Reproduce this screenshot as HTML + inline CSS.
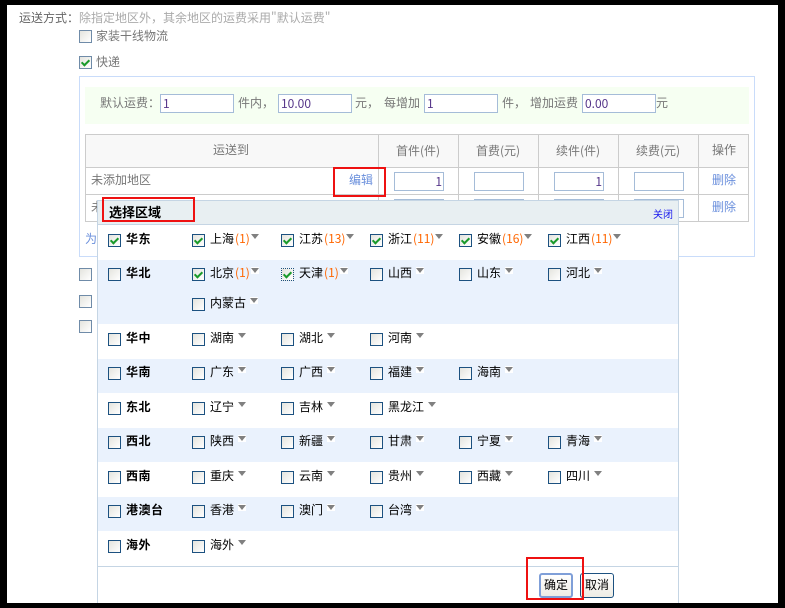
<!DOCTYPE html>
<html lang="zh"><head><meta charset="utf-8"><style>
html,body{margin:0;padding:0;background:#000}
#p{position:relative;width:785px;height:608px;overflow:hidden;background:#000;font:12px/14px "WenQuanYi Zen Hei","Noto Sans CJK SC","Liberation Sans",sans-serif;color:#000}
#w{position:absolute;left:7px;top:5px;width:771px;height:598px;background:#fff}
#p div,#p span.t,#p span.in,#p i.c,#p span.i{position:absolute;display:block}
.t{white-space:nowrap;color:#777}
.in{height:17px;width:72px;border:1px solid #a5bcd8;background:#fff;color:#56368a;line-height:17px;padding:0;text-indent:2px}
.sm{width:48px;text-align:right;text-indent:0}
.sm b{font-weight:normal;margin-right:1px}
.c{width:11px;height:11px;border:1px solid #1c5180;background:linear-gradient(135deg,#e4e4de,#fff);box-sizing:content-box}
.g{border-color:#6f8ba8}
.k:after{content:"";position:absolute;left:3px;top:1px;width:3px;height:6px;border:solid #1a9a2a;border-width:0 2px 2px 0;transform:rotate(45deg)}
.d{border-style:dotted}
.h{left:0;width:100%}
.i{white-space:nowrap;height:14px;left:0}
.i u{position:absolute;left:18px;top:-2px;text-decoration:none;color:#000;white-space:nowrap}
.i em{font-style:normal;color:#f60;margin-left:1px}
.i s{display:inline-block;position:relative;width:8px;height:7px;background:#fff;vertical-align:3px;margin-left:1px}
.i s:after{content:"";position:absolute;left:0;top:1px;width:0;height:0;border:solid transparent;border-width:5px 4px 0;border-top-color:#808080}
.x0{left:108px}.x1{left:192px}.x2{left:281px}.x3{left:370px}.x4{left:459px}.x5{left:548px}
.a u s{margin-left:4px}
.l{position:absolute;left:18px;top:-2px;font-weight:bold;color:#000;white-space:nowrap;letter-spacing:.5px}
.red{border:2px solid #ee1111;box-sizing:border-box}
.bl{color:#6a8fdc}
.th{background:#f8f8f8;box-sizing:border-box;border-right:1px solid #ccc;border-bottom:1px solid #ccc}
.btn{top:573px;width:34px;height:25px;box-sizing:border-box;background:linear-gradient(#fff,#eeece4);border:1px solid #1c5180;border-radius:3px;text-align:center;line-height:21px;color:#000}
</style></head><body><div id="p"><div id="w" style="left:7px"></div>

<span class="t" style="left:19px;top:11px;color:#666">运送方式：</span>
<span class="t" style="left:79px;top:11px;color:#aaa">除指定地区外，其余地区的运费采用"默认运费"</span>
<i class="c g" style="left:79px;top:30px"></i><span class="t" style="left:96px;top:29px">家装干线物流</span>
<i class="c g k" style="left:79px;top:56px"></i><span class="t" style="left:96px;top:55px">快递</span>

<div style="left:79px;top:76px;width:674px;height:179px;border:1px solid #c9dcfa"></div>
<div style="left:85px;top:87px;width:664px;height:37px;background:#f6fff2"></div>
<span class="t" style="left:100px;top:96px">默认运费：</span>
<span class="in" style="left:160px;top:94px">1</span>
<span class="t" style="left:238px;top:96px">件内，</span>
<span class="in" style="left:278px;top:94px">10.00</span>
<span class="t" style="left:355px;top:96px">元，</span><span class="t" style="left:384px;top:96px">每增加</span>
<span class="in" style="left:424px;top:94px">1</span>
<span class="t" style="left:502px;top:96px">件，</span><span class="t" style="left:530px;top:96px">增加运费</span>
<span class="in" style="left:582px;top:94px">0.00</span>
<span class="t" style="left:656px;top:96px">元</span>

<div style="left:85px;top:134px;width:664px;height:88px;box-sizing:border-box;border:1px solid #ccc;border-right:0;border-bottom:0"></div>
<div class="th" style="left:86px;top:135px;width:293px;height:33px"></div>
<div class="th" style="left:379px;top:135px;width:80px;height:33px"></div>
<div class="th" style="left:459px;top:135px;width:80px;height:33px"></div>
<div class="th" style="left:539px;top:135px;width:80px;height:33px"></div>
<div class="th" style="left:619px;top:135px;width:80px;height:33px"></div>
<div class="th" style="left:699px;top:135px;width:50px;height:33px"></div>
<div class="th" style="left:86px;top:168px;width:293px;height:27px;background:#fff"></div>
<div class="th" style="left:379px;top:168px;width:80px;height:27px;background:#fff"></div>
<div class="th" style="left:459px;top:168px;width:80px;height:27px;background:#fff"></div>
<div class="th" style="left:539px;top:168px;width:80px;height:27px;background:#fff"></div>
<div class="th" style="left:619px;top:168px;width:80px;height:27px;background:#fff"></div>
<div class="th" style="left:699px;top:168px;width:50px;height:27px;background:#fff"></div>
<div class="th" style="left:86px;top:195px;width:293px;height:27px;background:#fff"></div>
<div class="th" style="left:379px;top:195px;width:80px;height:27px;background:#fff"></div>
<div class="th" style="left:459px;top:195px;width:80px;height:27px;background:#fff"></div>
<div class="th" style="left:539px;top:195px;width:80px;height:27px;background:#fff"></div>
<div class="th" style="left:619px;top:195px;width:80px;height:27px;background:#fff"></div>
<div class="th" style="left:699px;top:195px;width:50px;height:27px;background:#fff"></div>

<span class="t" style="left:213px;top:143px">运送到</span>
<span class="t" style="left:396px;top:144px">首件(件)</span>
<span class="t" style="left:476px;top:144px">首费(元)</span>
<span class="t" style="left:556px;top:144px">续件(件)</span>
<span class="t" style="left:636px;top:144px">续费(元)</span>
<span class="t" style="left:712px;top:143px">操作</span>
<span class="t" style="left:91px;top:173px">未添加地区</span>
<span class="t bl" style="left:349px;top:173px">编辑</span>
<span class="t" style="left:91px;top:200px">未</span>
<span class="in sm" style="left:394px;top:172px"><b>1</b></span>
<span class="in sm" style="left:474px;top:172px"></span>
<span class="in sm" style="left:554px;top:172px"><b>1</b></span>
<span class="in sm" style="left:634px;top:172px"></span>
<span class="in sm" style="left:394px;top:199px"></span>
<span class="in sm" style="left:474px;top:199px"></span>
<span class="in sm" style="left:554px;top:199px"></span>
<span class="in sm" style="left:634px;top:199px"></span>
<span class="t bl" style="left:712px;top:173px">删除</span>
<span class="t bl" style="left:712px;top:200px">删除</span>
<span class="t bl" style="left:85px;top:232px">为</span>
<i class="c g" style="left:79px;top:268px"></i>
<i class="c g" style="left:79px;top:295px"></i>
<i class="c g" style="left:79px;top:320px"></i>

<div style="left:97px;top:200px;width:582px;height:403px;box-sizing:border-box;border:1px solid #c5d5e4;border-bottom:0;background:#fff"></div>
<div style="left:98px;top:201px;width:580px;height:23px;background:#e8eff2;border-bottom:1px solid #c5d5e4"></div>
<span class="t" style="left:109px;top:205px;color:#000;font-weight:bold;font-size:13px">选择区域</span>
<span class="t" style="left:653px;top:207px;color:#1a1aee;font-size:10px">关闭</span>

<div style="left:98px;top:260px;width:580px;height:64px;background:#eaf2fd"></div>
<div style="left:98px;top:359px;width:580px;height:34px;background:#eaf2fd"></div>
<div style="left:98px;top:428px;width:580px;height:34px;background:#eaf2fd"></div>
<div style="left:98px;top:497px;width:580px;height:34px;background:#eaf2fd"></div>
<div style="left:98px;top:566px;width:580px;height:1px;background:#c5d5e4"></div>

<div class="h" style="top:234px">
<span class="i x0"><i class="c k"></i><span class="l">华东</span></span>
<span class="i x1"><i class="c k"></i><u>上海<em>(1)</em><s></s></u></span>
<span class="i x2"><i class="c k"></i><u>江苏<em>(13)</em><s></s></u></span>
<span class="i x3"><i class="c k"></i><u>浙江<em>(11)</em><s></s></u></span>
<span class="i x4"><i class="c k"></i><u>安徽<em>(16)</em><s></s></u></span>
<span class="i x5"><i class="c k"></i><u>江西<em>(11)</em><s></s></u></span>
</div>
<div class="h" style="top:268px">
<span class="i x0"><i class="c"></i><span class="l">华北</span></span>
<span class="i x1"><i class="c k"></i><u>北京<em>(1)</em><s></s></u></span>
<span class="i x2"><i class="c k d"></i><u>天津<em>(1)</em><s></s></u></span>
<span class="i x3 a"><i class="c"></i><u>山西<s></s></u></span>
<span class="i x4 a"><i class="c"></i><u>山东<s></s></u></span>
<span class="i x5 a"><i class="c"></i><u>河北<s></s></u></span>
</div>
<div class="h" style="top:298px"><span class="i x1 a"><i class="c"></i><u>内蒙古<s></s></u></span></div>
<div class="h" style="top:333px">
<span class="i x0"><i class="c"></i><span class="l">华中</span></span>
<span class="i x1 a"><i class="c"></i><u>湖南<s></s></u></span>
<span class="i x2 a"><i class="c"></i><u>湖北<s></s></u></span>
<span class="i x3 a"><i class="c"></i><u>河南<s></s></u></span>
</div>
<div class="h" style="top:367px">
<span class="i x0"><i class="c"></i><span class="l">华南</span></span>
<span class="i x1 a"><i class="c"></i><u>广东<s></s></u></span>
<span class="i x2 a"><i class="c"></i><u>广西<s></s></u></span>
<span class="i x3 a"><i class="c"></i><u>福建<s></s></u></span>
<span class="i x4 a"><i class="c"></i><u>海南<s></s></u></span>
</div>
<div class="h" style="top:402px">
<span class="i x0"><i class="c"></i><span class="l">东北</span></span>
<span class="i x1 a"><i class="c"></i><u>辽宁<s></s></u></span>
<span class="i x2 a"><i class="c"></i><u>吉林<s></s></u></span>
<span class="i x3 a"><i class="c"></i><u>黑龙江<s></s></u></span>
</div>
<div class="h" style="top:436px">
<span class="i x0"><i class="c"></i><span class="l">西北</span></span>
<span class="i x1 a"><i class="c"></i><u>陕西<s></s></u></span>
<span class="i x2 a"><i class="c"></i><u>新疆<s></s></u></span>
<span class="i x3 a"><i class="c"></i><u>甘肃<s></s></u></span>
<span class="i x4 a"><i class="c"></i><u>宁夏<s></s></u></span>
<span class="i x5 a"><i class="c"></i><u>青海<s></s></u></span>
</div>
<div class="h" style="top:471px">
<span class="i x0"><i class="c"></i><span class="l">西南</span></span>
<span class="i x1 a"><i class="c"></i><u>重庆<s></s></u></span>
<span class="i x2 a"><i class="c"></i><u>云南<s></s></u></span>
<span class="i x3 a"><i class="c"></i><u>贵州<s></s></u></span>
<span class="i x4 a"><i class="c"></i><u>西藏<s></s></u></span>
<span class="i x5 a"><i class="c"></i><u>四川<s></s></u></span>
</div>
<div class="h" style="top:505px">
<span class="i x0"><i class="c"></i><span class="l">港澳台</span></span>
<span class="i x1 a"><i class="c"></i><u>香港<s></s></u></span>
<span class="i x2 a"><i class="c"></i><u>澳门<s></s></u></span>
<span class="i x3 a"><i class="c"></i><u>台湾<s></s></u></span>
</div>
<div class="h" style="top:540px">
<span class="i x0"><i class="c"></i><span class="l">海外</span></span>
<span class="i x1 a"><i class="c"></i><u>海外<s></s></u></span>
</div>

<div class="btn" style="left:539px;border:2px solid #7f9fd8;line-height:19px">确定</div>
<div class="btn" style="left:580px">取消</div>

<div class="red" style="left:333px;top:167px;width:53px;height:30px"></div>
<div class="red" style="left:102px;top:197px;width:93px;height:25px"></div>
<div class="red" style="left:526px;top:557px;width:58px;height:43px"></div>
</div></body></html>
